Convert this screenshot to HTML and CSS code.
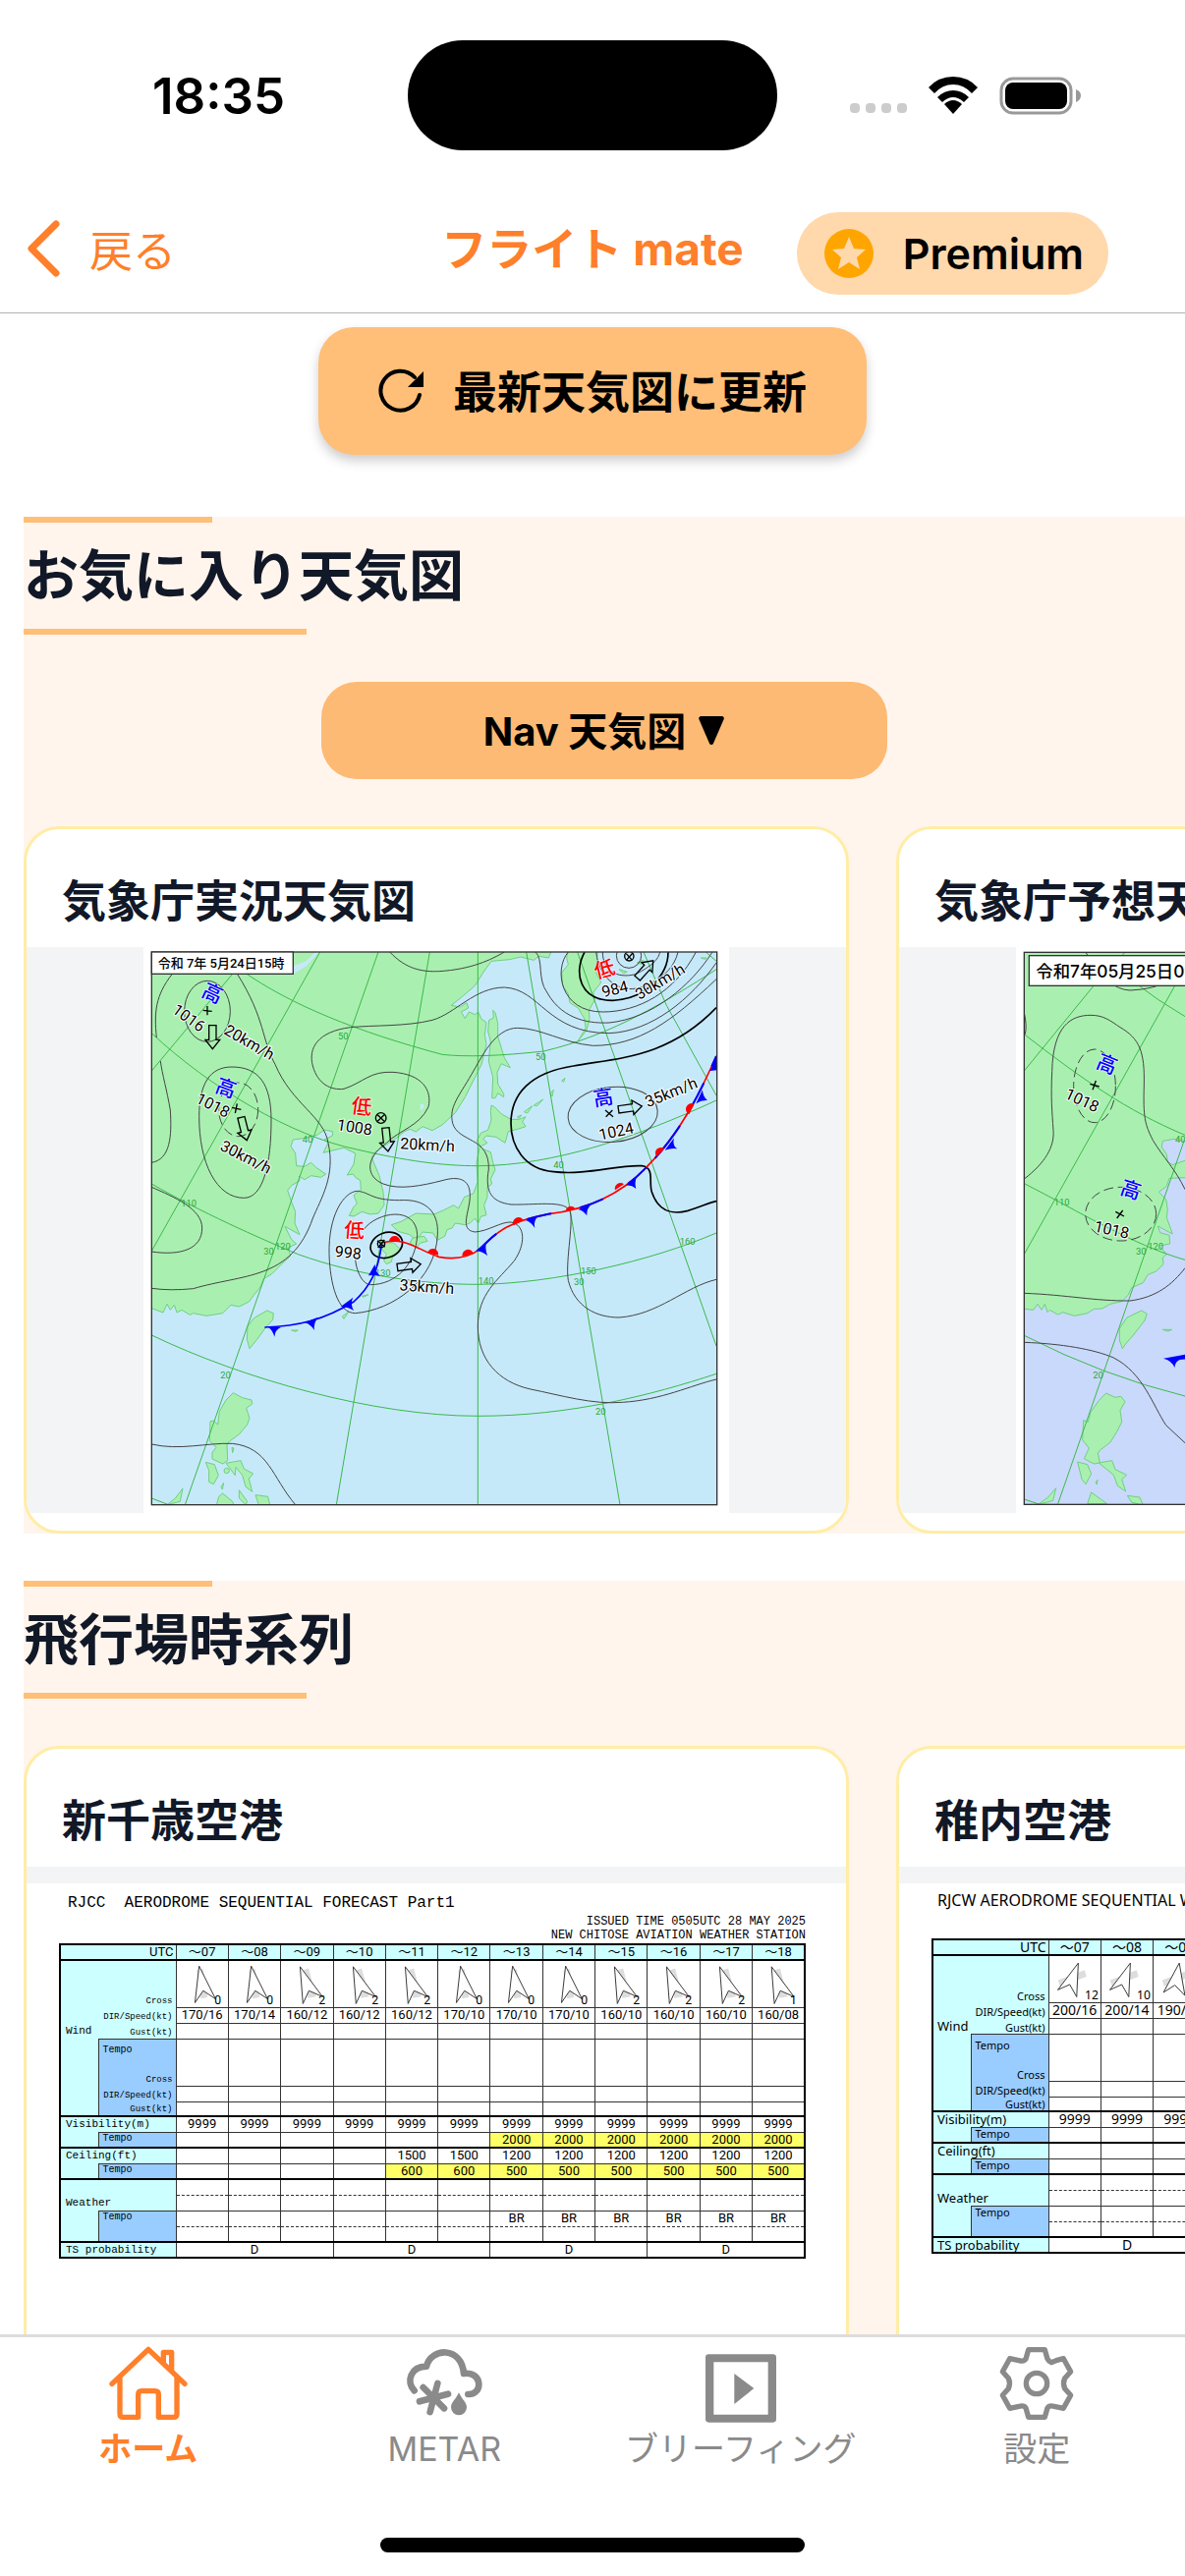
FILE: index.html
```html
<!DOCTYPE html>
<html lang="ja">

<head>
	<meta charset="UTF-8">
	<title>フライト mate</title>
	<meta name="viewport" content="width=device-width, initial-scale=1.0">
	<link rel="stylesheet" href="styles.css">
	<script defer src="main.js"></script>
</head>

<body>
	<header>
		<div class="status">
			<div class="time">18:35</div>
			<div class="island"></div>
			<div class="signals">
				<span class="dots"><i></i><i></i><i></i><i></i></span>
				<svg class="wifi" viewBox="0 0 50 38">
					<path d="M25 38 L16 28 Q25 20 34 28 Z" />
					<path d="M25 14 Q34 14 41 21 L36 26 Q25 16 14 26 L9 21 Q16 14 25 14 Z" />
					<path d="M25 0 Q40 0 50 11 L44 17 Q36 8 25 8 Q14 8 6 17 L0 11 Q10 0 25 0 Z" />
				</svg>
				<svg class="battery" viewBox="0 0 83 39">
					<rect class="shell" x="2" y="2" width="71" height="35" rx="12" />
					<rect x="6" y="6" width="63" height="27" rx="8" />
					<path class="nub" d="M78 13 Q83 15 83 19 Q83 24 78 26 Z" />
				</svg>
			</div>
		</div>
		<nav class="navbar">
			<a class="back" href="#">
				<svg viewBox="0 0 34 58"><path d="M30 4 L5 29 L30 54" /></svg>
				戻る
			</a>
			<h1>フライト mate</h1>
			<button class="premium" type="button">
				<svg viewBox="0 0 50 50">
					<circle cx="25" cy="25" r="25" />
					<path d="M25 8 L30 20 L42 21 L33 29 L36 41 L25 34 L14 41 L17 29 L8 21 L20 20 Z" />
				</svg>
				Premium
			</button>
		</nav>
	</header>

	<main>
		<button class="refresh" type="button">
			<svg viewBox="0 0 46 46">
				<path class="arc" d="M42 27 A20 20 0 1 1 37 9" />
				<path d="M46 3 V19 H30 Z" />
			</svg>
			<span>最新天気図に更新</span>
		</button>

		<section>
			<h2>お気に入り天気図</h2>
			<button class="select-chart" type="button">
				<span>Nav 天気図</span>
				<svg viewBox="0 0 26 28"><path d="M3 2 H23 L13 25 Z" /></svg>
			</button>
			<div class="cards">
				<article class="card">
					<h3>気象庁実況天気図</h3>
					<div class="picture">
						<svg class="map" viewBox="48 42 1788 1728" role="img" aria-label="気象庁実況天気図">
							<rect class="paper" x="48" y="42" width="1788" height="1728" />
							<clipPath id="frame1"><rect x="73" y="57" width="1726" height="1688" /></clipPath>
							<g clip-path="url(#frame1)">
								<rect class="sea" x="73" y="57" width="1726" height="1688" />
								<!-- land -->
								<g class="land">
									<path d="M60 40 H1300 L1285 75 L1255 70 L1240 82 L1200 72 L1165 80 L1110 85 L1085 120 L1060 160 L1025 190 L988 220 L1015 225 L1035 212 L1040 228 L1018 240 L1030 260 L1042 240 L1060 248 L1070 240 L1080 262 L1095 272 L1090 310 L1095 340 L1080 400 L1055 450 L1030 500 L1000 548 L960 585 L930 602 L900 590 L880 606 L862 598 L845 605 L820 625 L790 645 L755 668 L745 685 L768 740 L780 790 L783 830 L765 855 L740 858 L715 850 L690 864 L676 862 L690 835 L700 825 L690 800 L712 782 L710 755 L695 745 L688 735 L670 738 L690 705 L695 672 L660 655 L630 662 L597 670 L612 640 L600 630 L625 618 L625 605 L600 600 L580 615 L545 625 L505 630 L498 650 L512 672 L515 710 L540 712 L560 700 L575 715 L605 735 L590 745 L560 740 L540 752 L523 742 L525 755 L500 770 L488 785 L500 820 L512 850 L510 885 L525 920 L480 895 L500 935 L515 948 L490 960 L497 985 L470 1010 L440 1040 L415 1055 L405 1080 L385 1105 L370 1125 L340 1140 L315 1135 L290 1160 L240 1168 L200 1160 L190 1165 L165 1150 L150 1158 L142 1135 L130 1150 L120 1132 L108 1158 L73 1145 Z" />
									<path d="M1345 50 L1340 75 L1345 95 L1325 120 L1328 160 L1345 185 L1350 212 L1375 228 L1395 262 L1398 290 L1375 328 L1400 298 L1410 262 L1408 235 L1425 205 L1422 180 L1445 150 L1430 120 L1435 50 Z" />
									<path d="M1115 235 L1122 242 L1130 275 L1130 315 L1150 380 L1168 410 L1140 398 L1128 425 L1130 460 L1148 490 L1148 500 L1130 488 L1122 503 L1112 503 L1115 440 L1102 390 L1108 330 L1100 300 L1103 265 L1117 258 Z" />
									<path d="M1110 525 L1120 530 L1142 552 L1170 568 L1195 568 L1215 560 L1205 575 L1215 590 L1190 598 L1162 605 L1152 640 L1125 622 L1095 618 L1085 628 L1098 640 L1078 650 L1066 635 L1078 610 L1100 600 L1110 570 L1108 545 Z" />
									<path d="M1075 650 L1088 660 L1108 668 L1115 700 L1122 722 L1108 750 L1112 765 L1098 775 L1098 805 L1088 830 L1095 860 L1078 865 L1070 885 L1060 870 L1045 885 L1030 890 L1000 885 L990 900 L975 905 L968 925 L945 937 L932 915 L900 912 L882 937 L860 920 L825 910 L805 890 L835 880 L880 855 L935 858 L965 845 L995 830 L1010 840 L1028 805 L1055 795 L1068 760 L1065 700 Z" />
									<path d="M785 945 L812 945 L832 965 L808 990 L805 1003 L790 1010 L782 1000 L790 980 L775 965 Z" />
									<path d="M870 930 L905 925 L915 940 L895 945 L880 960 L862 945 Z" />
									<path d="M425 1152 L445 1160 L443 1180 L420 1205 L395 1240 L372 1268 L364 1240 L366 1200 L385 1175 Z" />
									<path d="M322 1403 L350 1418 L378 1425 L380 1437 L362 1450 L372 1480 L365 1500 L340 1530 L312 1550 L303 1560 L305 1610 L290 1620 L258 1605 L258 1585 L270 1570 L250 1550 L252 1490 L262 1488 L275 1500 L280 1460 L300 1425 Z" />
									<path d="M238 1615 L265 1622 L277 1655 L262 1682 L248 1675 L248 1640 Z" />
									<path d="M300 1618 L345 1610 L355 1635 L383 1650 L370 1665 L380 1705 L360 1690 L350 1655 L330 1630 L328 1655 Z" />
									<path d="M290 1710 L320 1735 L325 1750 H270 L278 1720 Z M390 1715 L428 1720 L435 1750 L400 1745 Z M340 1700 L365 1735 L360 1745 L340 1725 Z M168 1695 L160 1735 L120 1745 L145 1725 Z" />
									<path d="M1190 560 l12 -5 -8 10z M1210 545 l25 -18 -15 22z M1240 525 l28 -18 -18 20z M1290 490 l10 -12 -4 20z M1325 450 l10 -8 -4 12z M655 1170 l20 -15 -15 22z M715 1108 l20 -5 -15 8z M500 1212 h20 l-8 4z M318 1570 l6 2 -4 14z M285 1690 l8 -12 -4 20z" />
									<path d="M1555 90 l18 -8 -6 12z M1500 110 l25 8 -12 4z M1750 75 h18 l-6 4z" />
									<circle cx="302" cy="1641" r="8" />
								</g>
								<path class="lake" d="M587 55 L545 100 L505 125 V100 L545 85 L575 55 Z M893 522 q12 -6 12 8 q-6 14 -12 8z" />
								<!-- graticule -->
								<g class="grid">
									<path d="M1069 57 V1745 M922 57 L637 1745 M765 57 L175 1745 M587 57 L73 970 M340 100 L73 420 M1217 57 L1365 930 L1503 1745 M1373 57 L1660 870 L1797 1260 M1575 57 L1645 220 L1797 495 M1765 57 L1797 85" />
									<path d="M350 115 C500 220 700 300 960 370 Q1069 382 1270 360 C1480 310 1640 210 1797 110" />
									<path d="M73 305 C250 470 500 620 700 660 C850 695 960 710 1069 710 C1300 710 1560 620 1797 510" />
									<path d="M73 765 C220 850 400 930 520 980 C700 1045 900 1072 1069 1072 C1300 1070 1600 1000 1797 915" />
									<path d="M73 1227 C350 1360 750 1474 1069 1474 C1350 1474 1600 1410 1797 1345 M73 1725 L125 1745" />
								</g>
								<g class="degrees">
									<text x="642" y="324">50</text><text x="533" y="638">40</text><text x="1245" y="388">50</text>
									<text x="1300" y="717">40</text><text x="163" y="835">110</text><text x="450" y="965">120</text>
									<text x="415" y="980">30</text><text x="755" y="1046">130</text><text x="1070" y="1072">140</text>
									<text x="1383" y="1040">150</text><text x="1362" y="1075">30</text><text x="1685" y="950">160</text>
									<text x="283" y="1360">20</text><text x="1428" y="1470">20</text>
								</g>
								<!-- isobars -->
								<g class="isobar">
									<path d="M73 700 C130 690 135 620 130 540 C120 480 105 430 100 390" />
									<path d="M135 125 C85 190 80 240 88 318" />
									<ellipse cx="243" cy="238" rx="70" ry="93" />
									<path d="M335 125 C420 260 410 330 450 400 C500 520 600 560 612 640 C635 740 590 810 565 870 C500 1060 350 1040 200 1085 Q130 1092 73 1084" />
									<path d="M318 408 C400 408 438 460 438 570 C438 700 415 808 355 808 C270 808 218 700 218 560 C218 460 250 408 318 408 Z" />
									<ellipse class="dashed" cx="338" cy="538" rx="60" ry="82" />
									<path d="M73 775 C140 805 227 840 227 900 C227 965 160 985 73 972" />
									<path d="M930 265 C850 285 750 280 680 287 C580 300 550 350 565 405 C580 460 620 480 660 475 C720 455 740 420 810 424 C900 430 930 480 918 530 C890 590 830 600 790 640 C720 690 730 745 780 765 C830 785 900 770 960 755 C1010 740 1045 750 1045 800 C1045 850 1010 905 1060 912 C1100 910 1140 880 1170 882 C1215 890 1215 950 1180 1000 C1130 1060 1069 1100 1069 1200 C1069 1300 1130 1370 1230 1392 C1320 1410 1420 1440 1510 1432 C1630 1425 1720 1380 1797 1362" />
									<path d="M800 57 C850 110 900 118 950 116 C1050 110 1110 80 1150 57" />
									<path d="M930 265 C1000 245 1060 165 1150 165 C1260 170 1280 305 1470 305 C1600 300 1720 200 1797 90" />
									<path d="M1797 140 C1660 270 1560 343 1420 343 C1330 335 1260 289 1190 289 C1120 289 1080 380 1050 430 C1010 500 980 530 992 580 C1010 640 1105 620 1102 720 C1090 790 1110 820 1170 828 C1240 830 1330 815 1348 845 C1365 870 1335 1000 1345 1060 C1365 1140 1430 1173 1500 1173 C1620 1165 1700 1080 1797 1057" />
									<path d="M1345 57 C1300 110 1320 240 1450 240 C1560 240 1670 180 1735 57 M1245 57 C1270 80 1250 140 1280 180 C1330 270 1420 275 1470 273 C1600 260 1720 160 1785 57" />
									<path d="M1430 57 C1440 150 1520 200 1600 150 C1640 130 1670 100 1680 57 M1450 57 C1450 110 1490 140 1550 125 C1600 100 1620 80 1625 57" />
									<circle cx="1530" cy="68" r="38" />
									<ellipse cx="1481" cy="553" rx="137" ry="84" transform="rotate(-5 1481 553)" />
									<path d="M615 980 C612 860 660 790 700 787 C740 790 740 815 830 815 C910 810 950 850 946 920 C940 1060 810 1150 695 1160 C640 1160 618 1070 615 980 Z" />
									<path d="M720 905 C760 850 880 830 884 920 C880 1010 820 1073 740 1073 C710 1070 690 1010 695 970" />
									<path d="M73 1560 C160 1580 240 1555 320 1558 C430 1570 440 1660 512 1745" />
								</g>
								<g class="isobar thick">
									<path d="M1797 227 C1650 380 1500 380 1360 405 C1230 425 1170 490 1170 580 C1170 650 1210 720 1300 728 C1400 740 1500 705 1570 710 C1610 715 1590 760 1600 790 C1620 850 1660 860 1710 847 C1750 835 1780 820 1797 818" />
									<path d="M1395 57 C1360 120 1380 205 1480 205 C1580 200 1650 130 1650 57" />
									<ellipse cx="790" cy="952" rx="50" ry="38" transform="rotate(-20 790 952)" />
								</g>
								<!-- fronts -->
								<g class="front">
									<path class="cold" d="M775 950 C765 1030 740 1080 690 1125 C600 1180 520 1200 418 1203" />
									<path class="warm" d="M775 945 C850 925 880 965 950 988 C1000 998 1040 990 1075 965 C1130 905 1170 880 1285 857 C1430 840 1520 780 1580 718 C1690 610 1750 480 1797 375" />
									<path class="cold stationary" d="M775 945 C850 925 880 965 950 988 C1000 998 1040 990 1075 965 C1130 905 1170 880 1285 857 C1430 840 1520 780 1580 718 C1690 610 1750 480 1797 375" />
								</g>
								<g class="half">
									<path d="M798 942 a17 17 0 0 1 34 -2 z M915 975 a17 17 0 0 1 33 8 z M1022 987 a17 17 0 0 1 34 -8 z M1178 892 a17 17 0 0 1 30 -16 z M1337 848 a16 16 0 0 1 30 -6 z M1488 784 a17 17 0 0 1 27 -18 z M1615 682 a17 17 0 0 1 24 -24 z M1714 553 a17 17 0 0 1 16 -32 z" />
								</g>
								<g class="tooth">
									<path d="M430 1203 H468 Q450 1210 448 1232 Q442 1212 430 1203 Z M540 1188 L582 1172 Q566 1190 570 1212 Q560 1195 540 1188 Z M650 1140 L688 1112 Q678 1130 690 1152 Q672 1140 650 1140 Z M735 1045 L755 1010 Q755 1035 772 1046 Q755 1042 735 1045 Z" />
									<path d="M1062 970 L1095 942 Q1090 965 1098 984 Q1082 970 1062 970 Z M1215 876 L1252 864 Q1238 880 1243 900 Q1232 882 1215 876 Z M1375 843 L1415 828 Q1400 842 1402 862 Q1390 846 1375 843 Z M1520 770 L1555 742 Q1546 760 1552 780 Q1538 768 1520 770 Z M1640 662 L1668 625 Q1662 648 1678 658 Q1660 655 1640 662 Z M1735 520 L1755 478 Q1755 498 1770 510 Q1752 508 1735 520 Z M1778 420 L1798 375 V418 Z" />
								</g>
								<!-- movement arrows -->
								<g class="arrow">
									<path d="M-11 -36 H11 V8 H22 L0 36 L-22 8 H-11 Z" transform="translate(259 317)" />
									<path d="M-11 -36 H11 V8 H22 L0 36 L-22 8 H-11 Z" transform="translate(355 597) rotate(-14)" />
									<path d="M-11 -36 H11 V8 H22 L0 36 L-22 8 H-11 Z" transform="translate(791 630) rotate(-6)" />
									<path d="M-11 -36 H11 V8 H22 L0 36 L-22 8 H-11 Z" transform="translate(859 1015) rotate(-98)" />
									<path d="M-11 -36 H11 V8 H22 L0 36 L-22 8 H-11 Z" transform="translate(1534 533) rotate(-98)" />
									<path d="M-11 -36 H11 V8 H22 L0 36 L-22 8 H-11 Z" transform="translate(1580 110) rotate(-138)" />
								</g>
								<g class="mark">
									<path d="M230 235 L257 238 M243 222 V250 M318 532 L346 538 M334 520 L328 549 M1458 540 L1482 560 M1480 540 L1460 560 M763 554 L783 574 M783 554 L763 574 M762 938 L785 958 M784 936 L764 960 M1522 62 L1540 82 M1542 60 L1522 82" />
									<circle cx="773" cy="564" r="16" />
									<circle cx="774" cy="948" r="11" />
									<circle cx="1531" cy="70" r="14" />
								</g>
							</g>
							<!-- pressure labels -->
							<g class="pressure">
								<text transform="translate(133 240) rotate(36)">1016</text>
								<text transform="translate(291 305) rotate(30)">20km/h</text>
								<text transform="translate(205 515) rotate(27)">1018</text>
								<text transform="translate(279 660) rotate(27)">30km/h</text>
								<text transform="translate(637 600) rotate(9)">1008</text>
								<text transform="translate(831 658) rotate(3)">20km/h</text>
								<text transform="translate(631 987) rotate(6)">998</text>
								<text transform="translate(829 1090) rotate(4)">35km/h</text>
								<text transform="translate(1442 632) rotate(-12)">1024</text>
								<text transform="translate(1588 532) rotate(-22)">35km/h</text>
								<text transform="translate(1452 196) rotate(-14)">984</text>
								<text transform="translate(1562 204) rotate(-31)">30km/h</text>
							</g>
							<g class="high">
								<text transform="translate(221 190) rotate(25)">高</text>
								<text transform="translate(263 482) rotate(20)">高</text>
								<text transform="translate(1424 528) rotate(-9)">高</text>
							</g>
							<g class="low">
								<text transform="translate(680 547) rotate(8)">低</text>
								<text transform="translate(659 926) rotate(5)">低</text>
								<text transform="translate(1431 138) rotate(-14)">低</text>
							</g>
							<rect class="frame" x="73" y="57" width="1726" height="1688" />
							<rect class="date-box" x="73" y="57" width="432" height="67" />
							<text class="date small" x="92" y="106">令和 7年 5月24日15時</text>
						</svg>
					</div>
				</article>

				<article class="card">
					<h3>気象庁予想天気図</h3>
					<div class="picture">
						<svg class="map" viewBox="402 0 1788 1728" role="img" aria-label="気象庁予想天気図">
							<rect class="paper" x="402" y="0" width="1788" height="1728" />
							<clipPath id="frame2"><rect x="427" y="16" width="1726" height="1686" /></clipPath>
							<g clip-path="url(#frame2)">
								<rect class="sea forecast" x="427" y="16" width="1726" height="1686" />
								<g class="land">
									<path d="M420 0 H1400 V500 L1100 600 L960 575 L918 592 L885 586 L850 592 L847 610 L862 634 L865 655 L880 665 L918 652 L960 690 L918 704 L870 706 L862 730 L838 748 L860 770 L865 800 L862 826 L880 876 L835 852 L842 872 L870 880 L872 906 L840 912 L862 938 L850 948 L852 968 L830 990 L805 1000 L790 1025 L755 1040 L745 1062 L725 1082 L690 1090 L665 1104 L640 1105 L620 1118 L580 1126 L545 1115 L530 1122 L505 1108 L498 1115 L490 1090 L480 1108 L468 1090 L455 1108 L420 1104 Z" />
									<path d="M785 1110 L802 1120 L795 1140 L760 1185 L738 1210 L727 1226 L718 1200 L718 1165 L740 1132 Z" />
									<path d="M677 1362 L705 1375 L722 1372 L735 1388 L720 1415 L725 1450 L710 1480 L690 1512 L660 1535 L652 1545 L658 1575 L640 1578 L610 1562 L625 1530 L605 1505 L608 1445 L622 1450 L630 1420 L655 1385 Z" />
									<path d="M590 1572 L620 1580 L632 1608 L615 1640 L603 1625 Z M655 1575 L695 1568 L705 1595 L740 1612 L725 1625 L737 1662 L712 1645 L700 1612 Z M632 1665 L680 1700 H620 Z M742 1675 L780 1680 L790 1705 L755 1695 Z M524 1652 L515 1690 L470 1702 L500 1680 Z M850 1168 h28 l-12 5z M645 1635 l6 -8 -2 14z" />
								</g>
								<g class="grid">
									<path d="M915 592 L530 1700 M900 95 L427 938 M640 117 L427 378 M735 16 L640 117" />
									<path d="M427 266 C600 400 740 500 918 574 L1200 650 M427 722 C600 810 760 910 918 955 M427 1186 Q670 1310 918 1371 M760 105 Q830 160 918 212 M427 1686 L475 1702" />
								</g>
								<g class="degrees">
									<text x="888" y="596">40</text><text x="518" y="790">110</text><text x="768" y="940">30</text>
									<text x="805" y="925">120</text><text x="637" y="1318">20</text>
								</g>
								<g class="isobar">
									<path d="M427 708 C490 660 520 610 516 560 C512 500 508 460 512 380 C515 240 570 208 630 208 C670 208 690 225 720 245 C780 280 795 320 793 420 C790 520 795 540 820 590 C850 640 890 680 918 740" />
									<path d="M427 1057 C560 1062 640 1081 750 1080 C830 1070 880 1030 918 980" />
									<path d="M427 1207 C540 1211 640 1228 700 1254 C790 1300 820 1400 860 1460 L918 1514" />
									<path d="M615 16 Q680 130 750 132 Q820 130 880 100 M427 200 Q436 240 430 266 M427 1610 V1690" />
									<ellipse class="dashed" cx="642" cy="424" rx="64" ry="112" />
									<ellipse class="dashed" cx="722" cy="815" rx="108" ry="82" />
								</g>
								<g class="tooth">
									<path d="M852 1256 L930 1242 V1258 L902 1260 Q888 1266 886 1284 Q880 1264 852 1256 Z" />
								</g>
								<g class="mark">
									<path d="M628 418 L656 426 M646 408 L636 436 M706 808 L732 822 M728 804 L710 828" />
								</g>
							</g>
							<g class="pressure">
								<text transform="translate(548 460) rotate(25)">1018</text>
								<text transform="translate(638 868) rotate(12)">1018</text>
							</g>
							<g class="high">
								<text transform="translate(643 366) rotate(22)">高</text>
								<text transform="translate(716 752) rotate(18)">高</text>
							</g>
							<rect class="frame" x="427" y="16" width="1726" height="1686" />
							<rect class="date-box" x="442" y="26" width="560" height="92" />
							<text class="date" x="463" y="92">令和7年05月25日09時</text>
						</svg>
					</div>
				</article>
			</div>
		</section>

		<section>
			<h2>飛行場時系列</h2>
			<div class="cards">
				<article class="card">
					<h3>新千歳空港</h3>
					<div class="picture">
						<div class="forecast-sheet mono">
							<div class="sheet-title">RJCC&nbsp; AERODROME SEQUENTIAL FORECAST Part1</div>
							<div class="issued">ISSUED TIME 0505UTC 28 MAY 2025<br>NEW CHITOSE AVIATION WEATHER STATION</div>
							<table id="rjcc"></table>
						</div>
					</div>
				</article>
				<article class="card">
					<h3>稚内空港</h3>
					<div class="picture">
						<div class="forecast-sheet">
							<div class="sheet-title">RJCW AERODROME SEQUENTIAL WEATHER FORECAST</div>
							<div class="issued"></div>
							<table id="rjcw"></table>
						</div>
					</div>
				</article>
			</div>
		</section>
	</main>

	<footer>
		<a class="tab active" href="#">
			<svg viewBox="24 30 252 240">
				<path d="M39 151 L150 46 L261 151 M196 84 V55 H221 V112 M63 130 V242 Q63 253 73 253 H119 V184 Q119 173 130 173 H170 Q181 173 181 184 V253 H227 Q237 253 237 242 V130" />
			</svg>
			ホーム
		</a>
		<a class="tab" href="#">
			<svg class="weather" viewBox="930 30 252 240">
				<path d="M965 172 C938 144 955 98 1002 98 C1015 40 1110 35 1116 120 C1174 112 1176 185 1129 183 M1036 150 L1013 237 M992 162 L1056 226 M981 205 L1068 182" />
				<path class="fill" d="M1101 178 C1111 200 1125 208 1125 223 A24 24 0 0 1 1077 223 C1077 208 1091 200 1101 178 Z" />
			</svg>
			METAR
		</a>
		<a class="tab" href="#">
			<svg viewBox="0 0 252 240">
				<path class="frame-box" d="M28 31 H224 Q234 31 234 41 V229 Q234 239 224 239 H28 Q18 239 18 229 V41 Q18 31 28 31 Z M43 55 V215 H209 V55 Z" />
				<path class="fill" d="M106 90 L166 135 L106 183 Z" />
			</svg>
			ブリーフィング
		</a>
		<a class="tab" href="#">
			<svg viewBox="0 0 252 240">
				<path d="M101 17 H151 L159 45 Q162 52 172 56 L186 50 L208 44 L230 84 L212 104 Q205 120 212 136 L230 156 L208 196 L180 190 Q164 186 159 195 L151 223 H101 L93 195 Q88 186 72 190 L44 196 L22 156 L40 136 Q47 120 40 104 L22 84 L44 44 L72 50 Q88 54 93 45 Z" />
				<circle cx="126" cy="120" r="32" />
			</svg>
			設定
		</a>
		<div class="home-indicator"></div>
	</footer>
</body>

</html>
```
FILE: styles.css
```css
* {
	box-sizing: border-box;
}

body {
	margin: 0;
	height: 100vh;
	display: flex;
	flex-direction: column;
	background: #ffffff;
	color: #000000;
	font-family: Inter, "Noto Sans CJK JP", sans-serif;
}

button {
	border: 0 none;
	font: inherit;
	color: inherit;
	cursor: pointer;
}

a {
	text-decoration: none;
}

h1,
h2,
h3 {
	margin: 0;
}

/* header */

header {
	flex: none;
	border-bottom: 1px solid #b3b3b3;
}

.status {
	display: grid;
	grid-template-columns: 1fr auto 1fr;
	align-items: center;
	height: 178px;
	padding-top: 16px;
}

.time {
	padding-left: 30px;
	text-align: center;
	font-size: 51px;
	font-weight: 600;
}

.island {
	width: 376px;
	height: 112px;
	border-radius: 56px;
	background: #000000;
}

.signals {
	display: flex;
	justify-content: center;
	align-items: center;
	gap: 22px;
	padding-right: 32px;
}

.dots {
	display: flex;
	gap: 6px;
	padding-top: 26px;
}

.dots i {
	width: 10px;
	height: 10px;
	border-radius: 4px;
	background: #cccccc;
}

.wifi {
	width: 50px;
	height: 38px;
}

.battery {
	width: 83px;
	height: 39px;
}

.battery .shell {
	fill: none;
	stroke: #999999;
	stroke-width: 3;
}

.battery .nub {
	fill: #999999;
}

.navbar {
	display: grid;
	grid-template-columns: 1fr auto 1fr;
	align-items: center;
	height: 140px;
	padding-top: 10px;
}

.back {
	display: flex;
	align-items: center;
	gap: 30px;
	padding-left: 27px;
	color: #ff7f2a;
	font-size: 44px;
}

.back svg {
	width: 34px;
	height: 58px;
	fill: none;
	stroke: currentColor;
	stroke-width: 7;
	stroke-linecap: round;
	stroke-linejoin: round;
}

.navbar h1 {
	color: #ff7f2a;
	font-size: 46px;
	font-weight: 700;
	line-height: 64px;
}

.premium {
	display: flex;
	justify-content: center;
	justify-self: end;
	align-items: center;
	gap: 30px;
	height: 84px;
	margin: 10px 78px 0 0;
	padding: 0 25px 0 28px;
	border-radius: 42px;
	background: #ffd8ac;
	font-size: 43px;
	font-weight: 600;
}

.premium svg {
	width: 50px;
	height: 50px;
	fill: #ffa500;
}

.premium path {
	fill: #ffd8ac;
}

/* content */

main {
	flex: 1;
	min-height: 0;
	overflow-x: hidden;
	overflow-y: auto;
	scrollbar-width: none;
	padding-top: 14px;
}

.refresh {
	display: flex;
	align-items: center;
	gap: 30px;
	height: 130px;
	margin: 0 auto;
	padding: 0 61px;
	border-radius: 36px;
	background: #ffbf78;
	box-shadow: 0 6px 12px rgba(0, 0, 0, .2);
	font-size: 45px;
	font-weight: 700;
}

.refresh span,
.select-chart span {
	padding-bottom: 4px;
}

.refresh svg {
	width: 46px;
	height: 46px;
}

.refresh .arc {
	fill: none;
	stroke: #000000;
	stroke-width: 4;
	stroke-linecap: round;
}

section {
	margin: 48px 0 0 24px;
	background: #fff5ec;
}

.refresh+section {
	margin-top: 63px;
}

h2 {
	color: #111827;
	font-size: 56px;
	font-weight: 700;
	line-height: 108px;
}

h2:before,
h2:after {
	content: "";
	display: block;
	width: 192px;
	height: 6px;
	background: #ffbf78;
}

h2:after {
	width: 288px;
}

.select-chart {
	display: flex;
	justify-content: center;
	align-items: center;
	gap: 12px;
	width: 576px;
	height: 99px;
	margin: 48px auto 0;
	border-radius: 36px;
	background: #fdba74;
	font-size: 40px;
	font-weight: 700;
}

.select-chart svg {
	width: 28px;
	height: 30px;
	stroke: #000000;
	stroke-width: 4;
	stroke-linejoin: round;
}

.cards {
	display: flex;
	gap: 48px;
	padding-top: 48px;
	overflow-x: auto;
	scrollbar-width: none;
}

.card {
	flex: none;
	width: 840px;
	height: 720px;
	overflow: hidden;
	border: 3px solid #ffeda6;
	border-radius: 36px;
	background: #ffffff;
}

.card h3 {
	padding: 42px 36px 14px;
	color: #111827;
	font-size: 45px;
	font-weight: 700;
	line-height: 64px;
}

.picture {
	display: flex;
	flex-direction: column;
	justify-content: center;
	align-items: center;
	height: 576px;
	background: #f3f4f6;
}

/* weather maps */

.map {
	width: 596px;
	height: 576px;
}

.paper,
.date-box {
	fill: #ffffff;
}

.sea,
.lake {
	fill: #c6e9fa;
}

.sea.forecast {
	fill: #c9d9fb;
}

.land {
	fill: #a9f0b0;
	stroke: #6fcf80;
	stroke-width: 3;
}

.grid {
	fill: none;
	stroke: #3cb84a;
	stroke-width: 3;
}

.degrees {
	fill: #2aa83a;
	font: 28px Roboto, sans-serif;
}

.isobar {
	fill: none;
	stroke: #444444;
	stroke-width: 3;
}

.isobar.thick {
	stroke: #000000;
	stroke-width: 5;
}

.isobar .dashed {
	stroke-dasharray: 30 14;
}

.front {
	fill: none;
	stroke-width: 5;
}

.cold {
	stroke: #0000ff;
}

.warm {
	stroke: #ff0000;
}

.stationary {
	stroke-width: 6;
	stroke-dasharray: 0 310 75 105 75 90 75 90 75 38 125 65 85 55 60 900;
}

.half {
	fill: #ff0000;
}

.tooth {
	fill: #0000ff;
}

.arrow {
	fill: none;
	stroke: #000000;
	stroke-width: 4;
}

.mark {
	fill: none;
	stroke: #000000;
	stroke-width: 4;
}

.frame,
.date-box {
	stroke: #333333;
	stroke-width: 4;
}

.frame {
	fill: none;
}

.pressure,
.high,
.low {
	font: 48px Roboto, "Noto Sans CJK JP", sans-serif;
	paint-order: stroke;
	stroke: #ffffff;
	stroke-width: 6;
}

.high,
.low {
	font-size: 62px;
	font-weight: 500;
	stroke-width: 3;
}

.high {
	fill: #0000ff;
}

.low {
	fill: #ff0000;
}

.date {
	font: 500 52px Inter, "Noto Sans CJK JP", sans-serif;
}

.date.small {
	font: 500 39px Roboto, "Noto Sans CJK JP", sans-serif;
}

/* aerodrome forecast */

.forecast-sheet {
	width: 100%;
	height: 542px;
	padding: 7px 0 0 33px;
	background: #ffffff;
	font-family: "Noto Sans", "Noto Sans CJK JP", sans-serif;
}

.forecast-sheet.mono {
	padding-top: 10px;
}

.sheet-title {
	padding-left: 6px;
	font-size: 16px;
	line-height: 20px;
	white-space: pre;
}

.issued {
	width: 760px;
	height: 29px;
	text-align: right;
	font-size: 12px;
	line-height: 14px;
}

.mono .sheet-title {
	padding-left: 9px;
}

.mono .issued {
	height: 31px;
	padding-top: 2px;
}

.mono,
.mono th {
	font-family: "Liberation Mono", monospace;
}

table {
	width: 760px;
	table-layout: fixed;
	border-collapse: collapse;
	border: 2px solid #000000;
	background: #ffffff;
}

th,
td {
	padding: 0;
	line-height: 12px;
	text-align: center;
	font-weight: 400;
}

td {
	border: 1px solid #333333;
	font-size: 14px;
}

.mono td,
.mono thead th {
	font: 13px/12px Roboto, "Noto Sans CJK JP", sans-serif;
}

th {
	background: #ccffff;
	font-size: 11px;
	text-align: left;
}

thead th {
	border: 1px solid #333333;
	font-size: 14px;
	text-align: center;
}

thead .utc {
	padding-right: 2px;
	text-align: right;
}

.c1 {
	width: 39px;
}

.c2 {
	width: 79px;
}

.name {
	padding-left: 4px;
	font-size: 13px;
	white-space: nowrap;
}

.mono .name {
	padding-left: 5px;
	font-size: 11px;
}

.sub {
	padding-right: 3px;
	text-align: right;
	vertical-align: bottom;
	white-space: nowrap;
}

.mono .sub {
	font-size: 9px;
}

.sub span {
	display: block;
	padding: 2px 0 18px 4px;
	text-align: left;
}

.mono .sub span {
	font-size: 10px;
}

.tempo {
	padding-left: 4px;
	background: #99ccff;
	border: 1px solid #333333;
	border-width: 1px 0 0 1px;
	vertical-align: top;
}

.sub.tempo {
	padding-left: 0;
	vertical-align: bottom;
}

.tempo.inner {
	border-top: 0 none;
}

.mono .tempo {
	font-size: 10px;
}

.mono .sub.tempo {
	font-size: 9px;
}

.low-text {
	vertical-align: bottom;
	padding-bottom: 2px;
}

.rule th,
.rule td {
	border-top: 2px solid #000000;
}

.dash td {
	border-bottom: 1px dashed #333333;
}

.dash+tr td {
	border-top: 1px dashed #333333;
}

.warn {
	background: #ffff66;
}

.wind {
	width: 100%;
	height: 45px;
	display: block;
}

.wind path {
	fill: #ffffff;
	stroke: #333333;
	stroke-width: 3;
}

.wind .runway {
	fill: #dddddd;
	stroke: none;
}

.wind text {
	font-size: 38px;
	text-anchor: end;
}

/* tab bar */

footer {
	flex: none;
	display: grid;
	grid-template-columns: repeat(4, 1fr);
	grid-template-rows: 1fr auto;
	height: 246px;
	border-top: 3px solid #dcdcdc;
	background: #ffffff;
}

.tab {
	display: flex;
	flex-direction: column;
	align-items: center;
	gap: 7px;
	padding-top: 7px;
	color: #8a8a8a;
	font-size: 34px;
	line-height: 40px;
	white-space: nowrap;
}

.tab.active {
	color: #ff7f2a;
	font-weight: 700;
}

.tab svg {
	width: 84px;
	height: 80px;
	fill: none;
	stroke: currentColor;
	stroke-width: 16;
	stroke-linecap: round;
	stroke-linejoin: round;
}

.tab .weather {
	stroke-width: 20;
}

.tab .fill,
.tab .frame-box {
	fill: currentColor;
	fill-rule: evenodd;
	stroke: none;
}

.home-indicator {
	grid-column: 1 / -1;
	justify-self: center;
	width: 432px;
	height: 15px;
	margin-bottom: 24px;
	border-radius: 8px;
	background: #000000;
}
```
FILE: main.js
```js
var arrows = {
	a: ['62,27 82,22 96,112 74,116', 'M69 13 L121 117 L82 91 L56 129 Z'],
	b: ['62,28 86,20 110,110 84,114', 'M59 15 L130 110 L87 91 L68 132 Z'],
	c: ['26,73 110,41 116,62 32,93', 'M90 19 L85 126 L63 87 L25 104 Z'],
	d: ['26,73 110,41 116,62 32,93', 'M80 19 L98 122 L66 89 L30 112 Z']
}

function repeat(value, times) {
	return new Array(times).fill(value)
}

function wind(item) {
	var arrow = arrows[item[0]]
	return '<svg class="wind" viewBox="0 0 160 140">' +
		'<polygon class="runway" points="' + arrow[0] + '"/><path d="' + arrow[1] + '"/>' +
		'<text x="' + item[2] + '" y="135">' + item[1] + '</text></svg>'
}

function row(height, head, cells, rowClass) {
	return '<tr class="' + (rowClass || '') + '" style="height:' + height + 'px">' + head + cells.map(function (cell) {
		return '<td' + (cell && cell[0] === '!' ? ' class="warn">' + cell.slice(1) : '>' + cell) + '</td>'
	}).join('') + '</tr>'
}

function build(id, data) {
	var empty = repeat('', 12)
	var html = '<colgroup><col class="c1"><col class="c2">' + repeat('<col>', 12).join('') + '</colgroup>'
	html += '<thead><tr style="height:16px"><th class="utc" colspan="2">UTC</th>'
	for (var hour = 7; hour < 19; hour++) {
		html += '<th>～' + (hour < 10 ? '0' : '') + hour + '</th>'
	}
	html += '</tr></thead><tbody>'
	html += row(48, '<th class="sub" colspan="2">Cross</th>', data.wind.map(wind), 'rule')
	html += row(16, '<th class="sub" colspan="2">DIR/Speed(kt)</th>', data.speed)
	html += row(16, '<th class="name">Wind</th><th class="sub">Gust(kt)</th>', empty)
	html += row(48, '<th rowspan="3"></th><th class="sub tempo"><span>Tempo</span>Cross</th>', empty)
	html += row(16, '<th class="sub tempo inner">DIR/Speed(kt)</th>', empty)
	html += row(15, '<th class="sub tempo inner">Gust(kt)</th>', empty)
	html += row(16, '<th class="name" colspan="2">Visibility(m)</th>', repeat('9999', 12), 'rule')
	html += row(16, '<th></th><th class="tempo">Tempo</th>', data.visibility)
	html += row(16, '<th class="name" colspan="2">Ceiling(ft)</th>', data.ceiling, 'rule')
	html += row(16, '<th></th><th class="tempo">Tempo</th>', data.ceilingTempo)
	html += row(16, '<th class="name low-text" colspan="2" rowspan="2">Weather</th>', empty, 'rule dash')
	html += row(16, '', empty)
	html += row(16, '<th rowspan="2"></th><th class="tempo" rowspan="2">Tempo</th>', data.weather, 'dash')
	html += row(16, '', empty)
	html += '<tr class="rule" style="height:16px"><th class="name" colspan="2">TS probability</th>' +
		repeat('<td colspan="3">D</td>', 4).join('') + '</tr></tbody>'
	document.getElementById(id).innerHTML = html
}

build('rjcc', {
	wind: [['a', 0, 139], ['a', 0, 139], ['b', 2, 139], ['b', 2, 139], ['b', 2, 139], ['a', 0, 139], ['a', 0, 139], ['a', 0, 139], ['b', 2, 139], ['b', 2, 139], ['b', 2, 139], ['b', 1, 139]],
	speed: ['170/16', '170/14', '160/12', '160/12', '160/12', '170/10', '170/10', '170/10', '160/10', '160/10', '160/10', '160/08'],
	visibility: repeat('', 6).concat(repeat('!2000', 6)),
	ceiling: repeat('', 4).concat(['1500', '1500'], repeat('1200', 6)),
	ceilingTempo: repeat('', 4).concat(['!600', '!600'], repeat('!500', 6)),
	weather: repeat('', 6).concat(repeat('BR', 6))
})

build('rjcw', {
	wind: [['c', 12, 154], ['c', 10, 154]].concat(repeat(['d', 8, 154], 10)),
	speed: ['200/16', '200/14'].concat(repeat('190/12', 10)),
	visibility: repeat('', 12),
	ceiling: repeat('', 12),
	ceilingTempo: repeat('', 12),
	weather: repeat('', 12)
})
```
